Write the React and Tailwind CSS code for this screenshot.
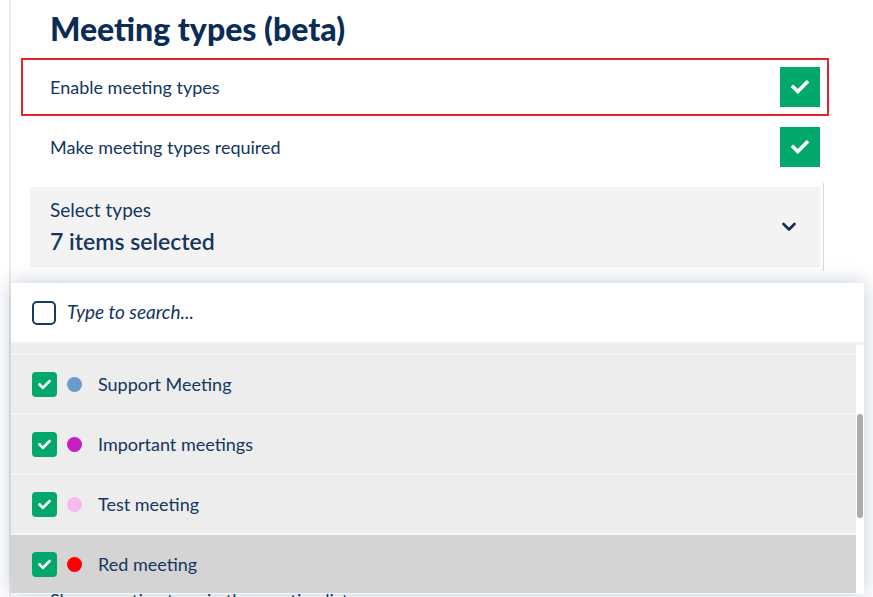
import React from "react";
import { FaCheck } from "react-icons/fa";

const navy = "text-[#14365f]";

function BigCheck() {
  return (
    <div className="flex h-10 w-10 items-center justify-center bg-[#02a86b]">
      <FaCheck className="text-white" size={18} />
    </div>
  );
}

function SettingRow({ label }) {
  return (
    <div className="flex h-10 items-center justify-between pl-5">
      <span className={`text-[18px] ${navy}`}>{label}</span>
      <BigCheck />
    </div>
  );
}

const types = [
  { name: "Client meeting", color: "bg-[#3fa34d]" },
  { name: "Support Meeting", color: "bg-[#6a9ccb]" },
  { name: "Important meetings", color: "bg-[#c41ec4]" },
  { name: "Test meeting", color: "bg-[#f6b9f0]" },
  { name: "Red meeting", color: "bg-[#ff0000]", hover: true },
];

function TypeRow({ item }) {
  return (
    <div
      className={`flex h-[60px] items-center border-b-2 border-[#f6f6f6] pl-[21px] ${
        item.hover ? "bg-[#d4d4d4]" : "bg-[#ededed]"
      }`}
    >
      <div className="flex h-[25px] w-[25px] items-center justify-center rounded-[4px] bg-[#02a86b]">
        <FaCheck className="text-white" size={13} />
      </div>
      <span className={`ml-[10px] h-[15px] w-[15px] rounded-full ${item.color}`} />
      <span className={`ml-4 text-[18px] ${navy}`}>{item.name}</span>
    </div>
  );
}

export default function App() {
  return (
    <div
      className="relative h-[597px] w-[873px] overflow-hidden bg-white"
      style={{ fontFamily: "Lato, 'Open Sans', sans-serif" }}
    >
      <div className="ml-[9px] h-full border-l-2 border-[#ececec] pl-[10px] pt-[9px]">
        <h1 className="pl-[29px] text-[32px] font-black leading-[40px] text-[#0b2c57]">
          Meeting types (beta)
        </h1>

        {/* highlighted setting */}
        <div className="mt-[9px] w-[808px] border-2 border-[#e3262c] p-[7px]">
          <SettingRow label="Enable meeting types" />
        </div>
        <div className="mt-[2px] w-[808px] p-[9px]">
          <SettingRow label="Make meeting types required" />
        </div>

        <div className="ml-[9px] mt-[7px] w-[794px] border-r border-[#cfdbe8] py-1">
          <div className="flex h-20 w-[790px] items-center justify-between bg-[#f3f3f3] pl-5 pr-[24px]">
            <div className={`self-start pt-3 ${navy}`}>
              <div className="text-[19px] leading-[22px]">Select types</div>
              <div className="mt-[3px] text-[23px] font-semibold leading-[34px]">7 items selected</div>
            </div>
            <svg width="14" height="10" viewBox="0 0 14 10" fill="none">
              <polyline
                points="1.5,2 7,7.5 12.5,2"
                stroke="#0f2f5a"
                strokeWidth="2.6"
                strokeLinecap="round"
                strokeLinejoin="round"
              />
            </svg>
          </div>
        </div>

        <div className={`mt-[316px] pl-[29px] text-[18px] ${navy}`}>
          Show meeting type in the meeting list
        </div>
      </div>

      {/* open dropdown */}
      <div className="absolute left-[11px] top-[283px] flex h-[311px] w-[853px] flex-col bg-white shadow-[0_0_20px_rgba(40,70,110,0.28)]">
        <div className="flex h-[62px] shrink-0 items-center border-b-[3px] border-[#f1f1f1] pl-[21px]">
          <div className="h-6 w-6 rounded-[5px] border-2 border-[#163a66] bg-white" />
          <span className={`ml-[11px] text-[19px] italic ${navy}`}>Type to search...</span>
        </div>
        <div className="flex min-h-0 flex-1">
          <div className="min-w-0 flex-1 overflow-hidden">
            <div className="-mt-[50px]">
              {types.map((t) => (
                <TypeRow key={t.name} item={t} />
              ))}
            </div>
          </div>
          <div className="w-2 pl-px pt-[69px]">
            <div className="h-[104px] w-[6px] rounded-full bg-[#acacac]" />
          </div>
        </div>
      </div>
    </div>
  );
}
